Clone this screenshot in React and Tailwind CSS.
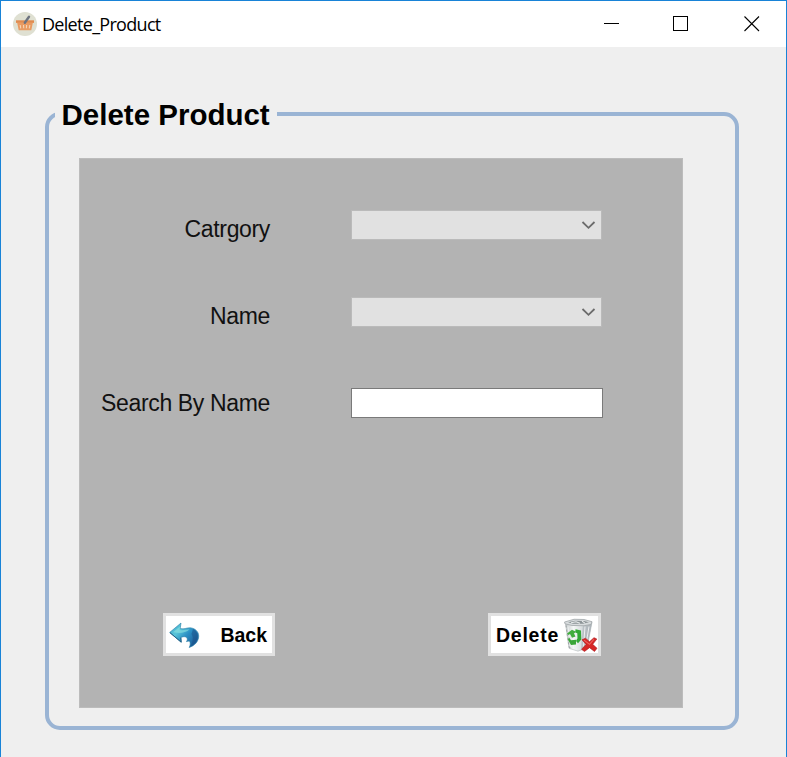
const label = "w-[190px] text-right text-[23px] leading-[30px] tracking-[-0.35px] whitespace-nowrap text-[#111]";

function BasketIcon() {
  return (
    <svg width="24" height="24" viewBox="0 0 24 24" className="shrink-0">
      <circle cx="12" cy="12" r="12" fill="#dfe0d2" />
      <path d="M3 8.5h18v2.500h-1.200l-1.500 7.300H5.700L4.200 11H3z" fill="#e99b62" />
      <path d="M3 8.500h18v2H3z" fill="#df8b50" />
      <path d="M7.200 13l.5 3.300M10.500 13l.2 3.300M13.600 13l-.2 3.300M16.800 13l-.5 3.300" stroke="#f6d3b2" strokeWidth="1.100" />
      <path d="M11.800 10.800l4.200-6" stroke="#6e7480" strokeWidth="2.400" strokeLinecap="round" />
    </svg>
  );
}

function BackIcon() {
  return (
    <svg width="31" height="28" viewBox="0 0 31 28" className="shrink-0">
      <defs>
        <linearGradient id="back" x1="0" y1="0" x2="1" y2="0.8">
          <stop offset="0" stopColor="#3fa5cc" />
          <stop offset=".35" stopColor="#58c4d8" />
          <stop offset=".6" stopColor="#2b8fc4" />
          <stop offset="1" stopColor="#1c5590" />
        </linearGradient>
      </defs>
      <path d="M.6 11.500L12 2l-.8 5.500c3.800 1.300 7-1.300 11-.6 5.500 1 8.300 5.500 7.300 10-.9 4.500-4 7.600-9.300 9.600 1.200-2.500 1.500-4.500.2-6.500l-3 .6c1.500-1.800 1.300-3.700-.7-4.600-1.600-.6-3.400-.2-4.900.6l.4 4.600z" fill="url(#back)" stroke="#287fa8" strokeWidth=".6" />
      <path d="M4 11.300l7-5.800-.4 3.500c4 1 7-.7 10-.7-3 3-8 4-13 3.500z" fill="#8de3df" opacity=".6" />
      <path d="M24 8c4 2 5.500 6 4 10-1 3-3.500 5.500-6 7 2-5 2.500-9 .500-12z" fill="#194d86" opacity=".5" />
      <path d="M1 11.700l11.200 9.500-.4-4.600" fill="none" stroke="#245f84" strokeWidth="1" />
    </svg>
  );
}

function TrashIcon() {
  return (
    <svg width="35" height="34" viewBox="0 0 35 32" preserveAspectRatio="none" className="shrink-0">
      <defs>
        <linearGradient id="bin" x1="0" y1="0" x2="1" y2="0">
          <stop offset="0" stopColor="#c5cacb" />
          <stop offset=".3" stopColor="#f5f7f7" />
          <stop offset=".65" stopColor="#d5dadd" />
          <stop offset="1" stopColor="#989fa5" />
        </linearGradient>
      </defs>
      <path d="M2.500 5L6 28.500l9 2.700 9-3L29 4z" fill="url(#bin)" stroke="#b3b9bb" strokeWidth=".6" />
      <path d="M20 6l-2 23 6-1.500L29 4z" fill="#b1b8be" opacity=".7" />
      <path d="M1.500 3.800L11 1.200l10 .2L29 3.500l-1 2.500-7 1.300L9 7 2 5.500z" fill="#d8dcde" stroke="#a2a8aa" strokeWidth=".8" />
      <path d="M5 4l7-1.500 9 .3 5 1.200-6 1.400-10-.1z" fill="#8b9396" />
      <path d="M8 4.500l5-1 4 1.500M19 3l3 1.800" stroke="#e9eded" strokeWidth="1" fill="none" />
      <path d="M22 8l-1.500 19M26 8l-3 17M5 8l3 20M11 26l3 4M7 23l3 6" stroke="#edf0f1" strokeWidth="1" fill="none" />
      <path d="M3 7l3 20 2 2" stroke="#9da4a5" strokeWidth="1" strokeDasharray="2 2" fill="none" />
      <path d="M4 14.500l5-3.500 4 2-2 1.500 1.500 3-3.500 1-2-3.500-1.500 1z" fill="#41ad3e" />
      <path d="M12.500 10.500l5.500 1.200.3 8.500-3.300 3.500-2-2 1-2 .5-.3-.2-5-2-.8z" fill="#31a835" />
      <path d="M6 18l2 3 5-.5v4.500L8 25.500l-3-5z" fill="#39a538" />
      <path d="M19 20.500l3.500-1.500 4 3.300 4.500-3.800 2.800 1.300-4.100 5 4.300 3.700-2.500 3-5-3.600-5 3.600-3-2 4.600-4.600z" fill="#d62626" stroke="#a91c20" strokeWidth=".6" />
      <path d="M21 20.800l5.500 4L31 20" stroke="#f06761" strokeWidth="1" fill="none" />
    </svg>
  );
}

function Combo() {
  return (
    <div className="mt-px ml-[81px] flex h-[30px] w-[251px] items-center justify-end border border-[#bababa] bg-[#e1e1e1] pr-[5px]">
      <svg width="15" height="10" viewBox="0 0 15 10" fill="none">
        <path d="M1.500 2l6 5.800L13.500 2" stroke="#6b6b6b" strokeWidth="1.800" />
      </svg>
    </div>
  );
}

export default function App() {
  return (
    <div className="flex h-[757px] w-[787px] flex-col border-x border-t border-[#1883d7] bg-[#efefef] font-['Liberation_Sans',Arial,sans-serif] text-black">
      <header className="flex h-[46px] shrink-0 items-center bg-white pl-3">
        <BasketIcon />
        <span className="ml-[5px] font-['Open_Sans',sans-serif] text-[18px] leading-6 tracking-[-0.7px]">Delete_Product</span>
        <div className="ml-auto flex items-center pr-[26px]">
          <svg width="156" height="16" viewBox="0 0 156 16" fill="none" stroke="#000">
            <path d="M0 7.500h15" shapeRendering="crispEdges" />
            <path d="M69.500.500h14v14h-14z" shapeRendering="crispEdges" />
            <path d="M140.500.500l14.500 14.500M155 .500l-14.500 14.500" strokeWidth="1.100" />
          </svg>
        </div>
      </header>

      <fieldset className="mt-[52px] ml-[44px] h-[631px] w-[694px] shrink-0 rounded-[15px] border-4 border-[#9ab4d4] pl-[6px]">
        <legend className="h-[30px] w-[222px] pl-[6.5px] text-[29.5px] leading-[32px] font-bold whitespace-nowrap">Delete Product</legend>
        <section className="mt-[29px] ml-6 flex h-[550px] w-[604px] flex-col border border-[#bcbcbc] bg-[#b3b3b3] pt-[50px]">
          <div className="flex h-[87px] items-start">
            <label className={label + " pt-[5px]"}>Catrgory</label>
            <Combo />
          </div>
          <div className="flex h-[87px] items-start">
            <label className={label + " pt-[5px]"}>Name</label>
            <Combo />
          </div>
          <div className="flex h-[87px] items-start">
            <label className={label + " pt-[5px]"}>Search By Name</label>
            <input className="mt-[5px] ml-[81px] h-[30px] w-[252px] border border-[#7a7a7a] bg-white outline-none" />
          </div>
          <div className="mt-[143px] flex pl-[83px]">
            <button className="flex h-[43px] w-[112px] items-center justify-between border-[3px] border-[#e1e1e1] bg-white pr-[5px] pl-[3px]">
              <BackIcon />
              <span className="pt-px text-[19.5px] leading-6 font-bold">Back</span>
            </button>
            <button className="ml-[213px] flex h-[43px] w-[113px] items-center justify-between border-[3px] border-[#e1e1e1] bg-white pl-[5px]">
              <span className="pt-px text-[19.5px] leading-6 font-bold tracking-[0.75px]">Delete</span>
              <TrashIcon />
            </button>
          </div>
        </section>
      </fieldset>
    </div>
  );
}
